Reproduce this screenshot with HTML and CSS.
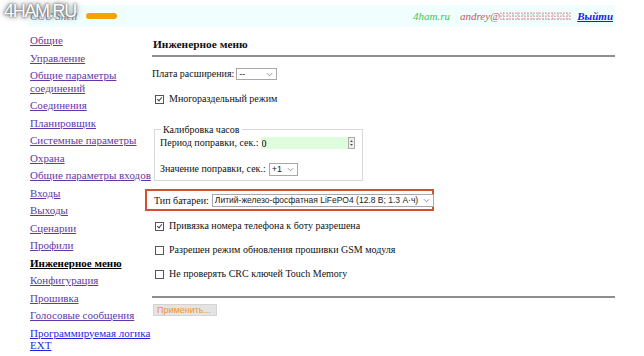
FILE: index.html
```html
<!DOCTYPE html>
<html lang="ru">
<head>
<meta charset="utf-8">
<title>CCU Shell — Инженерное меню</title>
<link rel="stylesheet" href="styles.css">
</head>
<body>
<div class="watermark">4HAM.RU</div>
<div class="page">
  <header class="header">
    <span class="brand">CCU Shell</span>
    <span class="pill"></span>
    <span class="user">
      <span class="site">4ham.ru</span>
      <span class="mail">andrey@<span class="noise"></span></span>
      <a class="logout" href="#">Выйти</a>
    </span>
  </header>
  <div class="main">
    <nav class="nav">
      <a class="v" href="#">Общие</a>
      <a class="v" href="#">Управление</a>
      <a class="v" href="#">Общие параметры соединений</a>
      <a class="v" href="#">Соединения</a>
      <a class="v" href="#">Планировщик</a>
      <a class="v" href="#">Системные параметры</a>
      <a class="v" href="#">Охрана</a>
      <a class="v" href="#">Общие параметры входов</a>
      <a class="v" href="#">Входы</a>
      <a class="v" href="#">Выходы</a>
      <a class="v" href="#">Сценарии</a>
      <a class="v" href="#">Профили</a>
      <a class="current" href="#">Инженерное меню</a>
      <a class="v" href="#">Конфигурация</a>
      <a class="v" href="#">Прошивка</a>
      <a class="v" href="#">Голосовые сообщения</a>
      <a class="nv" href="#">Программируемая логика EXT</a>
    </nav>
    <section class="content">
      <h1 class="title">Инженерное меню</h1>
      <div class="rule"></div>
      <div class="row r-board">
        <span class="lbl">Плата расширения:</span>
        <span class="sel sel-board"><select><option>--</option></select><svg class="chev" viewBox="0 0 8 5"><path d="M1 1 L4 4 L7 1" fill="none" stroke="#777" stroke-width="0.9"/></svg></span>
      </div>
      <label class="row check r-multi"><input type="checkbox" checked><span class="lbl">Многораздельный режим</span></label>
      <fieldset class="clock">
        <legend>Калибровка часов</legend>
        <div class="row">
          <span class="lbl">Период поправки, сек.:</span>
          <span class="num"><input type="text" value="0"><span class="spin"><svg viewBox="0 0 7 12"><path d="M3.5 2 L1.5 4.5 H5.5 Z M3.5 10 L1.5 7.5 H5.5 Z" fill="#444"/></svg></span></span>
        </div>
        <div class="row r-val">
          <span class="lbl">Значение поправки, сек.:</span>
          <span class="sel sel-val"><select><option>+1</option></select><svg class="chev" viewBox="0 0 8 5"><path d="M1 1 L4 4 L7 1" fill="none" stroke="#777" stroke-width="0.9"/></svg></span>
        </div>
      </fieldset>
      <div class="battery">
        <span class="lbl">Тип батареи:</span>
        <span class="sel sel-bat"><select><option>Литий-железо-фосфатная LiFePO4 (12.8 В; 1.3 А·ч)</option></select><svg class="chev" viewBox="0 0 8 5"><path d="M1 1 L4 4 L7 1" fill="none" stroke="#777" stroke-width="0.9"/></svg></span>
      </div>
      <label class="row check r-c1"><input type="checkbox" checked><span class="lbl">Привязка номера телефона к боту разрешена</span></label>
      <label class="row check r-c2"><input type="checkbox"><span class="lbl">Разрешен режим обновления прошивки GSM модуля</span></label>
      <label class="row check r-c3"><input type="checkbox"><span class="lbl">Не проверять CRC ключей Touch Memory</span></label>
      <div class="rule rule-bottom"></div>
      <button class="apply" type="button">Применить...</button>
    </section>
  </div>
</div>
</body>
</html>
```

FILE: styles.css
```css
html, body {
  margin: 0;
  padding: 0;
  background: #fff;
}
body {
  font-family: "Liberation Serif", "Times New Roman", serif;
  font-size: 11px;
  color: #111;
  width: 644px;
  height: 356px;
  overflow: hidden;
  position: relative;
}
.watermark {
  position: absolute;
  left: 4px;
  top: 1px;
  font-family: "Liberation Sans", Arial, sans-serif;
  font-size: 18px;
  letter-spacing: -1.3px;
  color: #fff;
  text-shadow: 0 0 2px #555, 0 0 4px #777, 0 0 7px #999;
  z-index: 5;
}
.page {
  width: 587px;
  margin-left: 28px;
}
.header {
  margin-top: 5px;
  height: 22px;
  background: #f0fffe;
  display: flex;
  align-items: center;
  padding: 0 2px;
}
.brand {
  font-style: italic;
  color: #6a7396;
  font-size: 11px;
}
.pill {
  width: 31px;
  height: 6px;
  border-radius: 3px;
  background: #f5a300;
  margin-left: 9px;
}
.user {
  margin-left: auto;
  display: flex;
  align-items: center;
  font-style: italic;
}
.site {
  color: #45c356;
}
.mail {
  color: #c2545a;
  margin-left: 10px;
  display: flex;
  align-items: center;
}
.noise {
  display: inline-block;
  width: 72px;
  height: 9px;
  opacity: 0.7;
  background-image:
    radial-gradient(circle at 30% 40%, rgba(200,90,100,0.6) 0.7px, transparent 1.1px),
    radial-gradient(circle at 60% 70%, rgba(170,150,165,0.55) 0.7px, transparent 1.1px),
    radial-gradient(circle at 50% 20%, rgba(225,140,130,0.5) 0.6px, transparent 1px);
  background-size: 3px 3px, 5px 4px, 7px 5px;
}
.logout {
  color: #1a1aee;
  font-weight: bold;
  margin-left: 5px;
}
.main {
  display: grid;
  grid-template-columns: 124px 1fr;
}
.nav {
  display: flex;
  flex-direction: column;
  align-items: flex-start;
  gap: 5px;
  padding: 7px 0 0 2px;
  line-height: 12.5px;
}
.nav a {
  font-size: 11px;
  text-decoration: underline;
}
.nav a.v { color: #6437a8; }
.nav a.nv { color: #1f1fe0; }
.nav a.current {
  color: #000;
  font-weight: bold;
}
.content {
  padding-top: 9px;
}
.title {
  font-size: 11.4px;
  font-weight: bold;
  line-height: 16px;
  margin: 0;
  padding-left: 1px;
}
.rule {
  border-top: 2px solid #8e8e8e;
  margin-top: 3px;
}
.lbl, legend {
  font-family: "Liberation Serif", "Times New Roman", serif;
  font-size: 10px;
  white-space: nowrap;
  flex-shrink: 0;
  color: #111;
}
.row {
  display: flex;
  align-items: center;
  height: 16px;
  line-height: 16px;
  white-space: nowrap;
}
.r-board { margin-top: 9px; }
.r-multi { margin-top: 9px; }
.check input {
  appearance: none;
  -webkit-appearance: none;
  flex-shrink: 0;
  width: 9px;
  height: 9px;
  margin: 0 5px 0 3px;
  border: 1px solid #555;
  background: #fff;
  position: relative;
  box-sizing: border-box;
}
.check input:checked::after {
  content: "";
  position: absolute;
  left: 2px;
  top: 0px;
  width: 2px;
  height: 4px;
  border: solid #444;
  border-width: 0 1px 1px 0;
  transform: rotate(40deg);
}
.sel {
  position: relative;
  display: inline-flex;
  align-items: center;
  flex-shrink: 0;
}
.sel select {
  appearance: none;
  -webkit-appearance: none;
  border: 1px solid #a8a8a8;
  background: #fff;
  border-radius: 0;
  box-sizing: border-box;
  font-family: "Liberation Sans", Arial, sans-serif;
  color: #222;
  padding: 0 0 0 2px;
  margin: 0;
}
.chev {
  position: absolute;
  right: 4px;
  top: 50%;
  width: 7px;
  height: 5px;
  margin-top: -2px;
  pointer-events: none;
}
.sel-board { margin-left: 2px; }
.sel-board select {
  width: 41px;
  height: 12px;
  font-size: 9px;
  line-height: 10px;
}
.clock {
  margin: 16px 0 0 2px;
  width: 209px;
  box-sizing: border-box;
  border: 1px solid #d8d8d8;
  padding: 0 6px 4px 5px;
}
.clock legend {
  padding: 0 2px;
  line-height: 13px;
  margin-left: 1px;
}
.clock .row { height: 14px; line-height: 14px; }
.clock .r-val { margin-top: 12px; }
.num {
  display: inline-flex;
  align-items: center;
  margin-left: 2px;
  flex-shrink: 0;
}
.num input {
  width: 87px;
  height: 12px;
  box-sizing: border-box;
  border: none;
  background: #ddfddd;
  font-family: "Liberation Serif", serif;
  font-size: 10px;
  padding: 0 1px;
  margin: 0;
  outline: none;
}
.spin {
  display: inline-block;
  width: 7px;
  height: 12px;
  border: 1px solid #aaa;
  box-sizing: border-box;
  background: #eee;
}
.spin svg { width: 5px; height: 10px; display: block; }
.sel-val { margin-left: 3px; }
.sel-val select {
  width: 29px;
  height: 13px;
  font-size: 9px;
  line-height: 11px;
}
.battery {
  margin: 8px 0 0 -7px;
  width: 289px;
  height: 22px;
  box-sizing: border-box;
  border: 2px solid #d3512e;
  display: flex;
  align-items: center;
  padding-left: 7px;
  white-space: nowrap;
}
.sel-bat { margin-left: 3px; }
.sel-bat select {
  width: 222px;
  height: 13px;
  font-size: 8.5px;
  line-height: 11px;
}
.r-c1 { margin-top: 7px; }
.r-c2 { margin-top: 8px; }
.r-c3 { margin-top: 8px; }
.rule-bottom { margin-top: 14px; }
.apply {
  margin: 6px 0 0 1px;
  width: 64px;
  height: 12px;
  padding: 0 0 0 3px;
  border: 1px solid #d4d4d4;
  background: #e4e4e4;
  color: #ec9436;
  font-family: "Liberation Sans", Arial, sans-serif;
  font-size: 9px;
  line-height: 10px;
  text-align: left;
  border-radius: 0;
}
```
